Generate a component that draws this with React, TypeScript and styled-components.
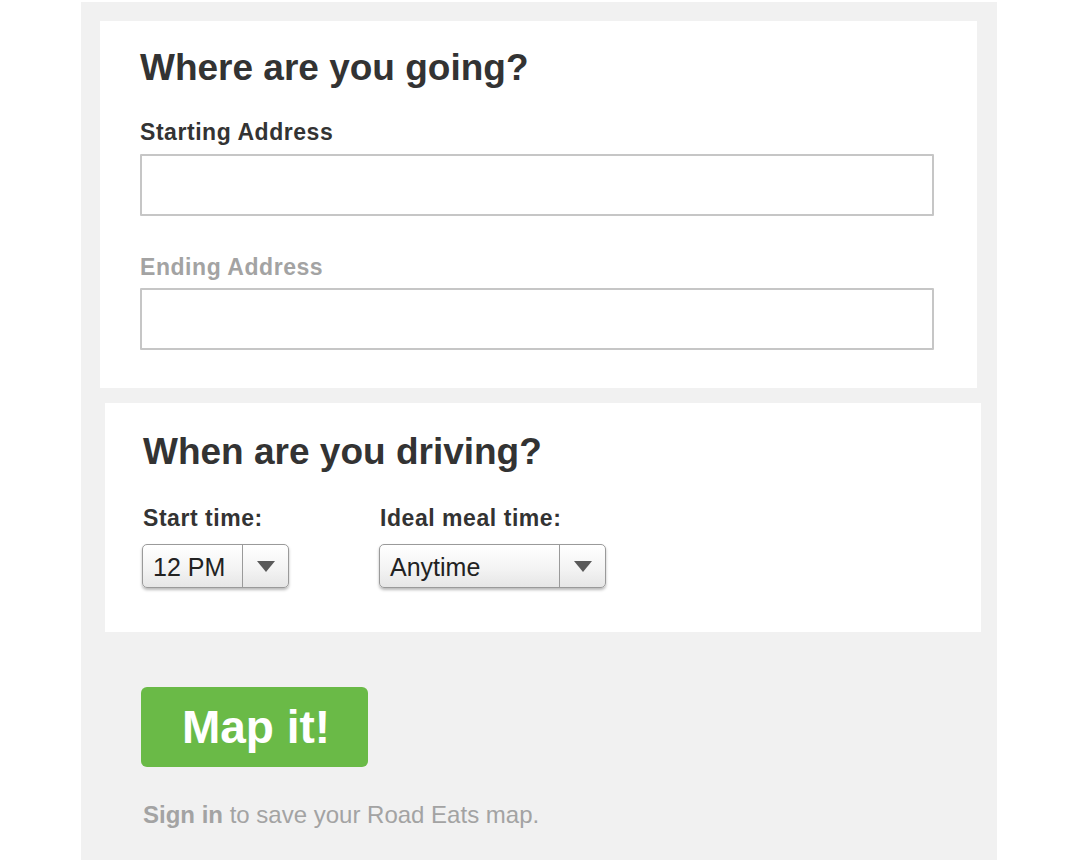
import React from 'react';
import styled, { createGlobalStyle } from 'styled-components';

const colors = {
  panel: '#f1f1f1',
  card: '#ffffff',
  text: '#333333',
  muted: '#a3a3a3',
  inputBorder: '#c6c6c6',
  green: '#6aba47',
};

const GlobalStyle = createGlobalStyle`
  body {
    margin: 0;
    background: #ffffff;
    font-family: "Liberation Sans", Arial, Helvetica, sans-serif;
    color: ${colors.text};
  }
`;

const Panel = styled('main')`
  box-sizing: border-box;
  width: 916px;
  min-height: 858px;
  margin: 2px 0 0 81px;
  padding: 19px 0 0;
  background: ${colors.panel};
`;

interface CardProps {
  offset: number;
}

const Card = styled('section')<CardProps>`
  box-sizing: border-box;
  background: ${colors.card};
  margin-left: ${props => props.offset}px;
`;

const PlaceCard = styled(Card)`
  width: 877px;
  padding: 28px 44px 38px 40px;
`;

const TimeCard = styled(Card)`
  width: 876px;
  margin-top: 15px;
  padding: 30px 40px 44px 38px;
`;

const Heading = styled('h2')`
  margin: 0;
  font-size: 37px;
  line-height: 37px;
  font-weight: bold;
  color: ${colors.text};
`;

const Field = styled('div')`
  display: flex;
  flex-direction: column;
  gap: 10px;
  margin-top: 35px;

  & + & {
    gap: 9px;
    margin-top: 40px;
  }
`;

interface LabelProps {
  dim?: boolean;
}

const Label = styled('label')<LabelProps>`
  font-size: 23px;
  line-height: 23px;
  font-weight: bold;
  letter-spacing: 0.55px;
  color: ${props => (props.dim ? colors.muted : colors.text)};
`;

const TextInput = styled('input')`
  box-sizing: border-box;
  width: 794px;
  height: 62px;
  margin: 0;
  padding: 0 14px;
  border: 2px solid ${colors.inputBorder};
  border-radius: 1px;
  background: #fff;
  font: 23px "Liberation Sans", Arial, sans-serif;
  outline: none;
`;

const TimeRow = styled('div')`
  display: flex;
  margin-top: 37px;
`;

interface TimeColumnProps {
  width?: number;
}

const TimeColumn = styled('div')<TimeColumnProps>`
  display: flex;
  flex-direction: column;
  align-items: flex-start;
  gap: 14px;
  width: ${props => (props.width ? `${props.width}px` : 'auto')};
`;

interface SelectBoxProps {
  width: number;
}

const SelectBox = styled('div')<SelectBoxProps>`
  box-sizing: border-box;
  display: flex;
  align-items: stretch;
  width: ${props => props.width}px;
  height: 44px;
  margin-left: -1px;
  border: 1px solid #9a9a9a;
  border-radius: 5px;
  background: linear-gradient(#ffffff, #f4f4f4 55%, #e6e6e6);
  box-shadow: 0 2px 3px rgba(0, 0, 0, 0.28);
`;

const SelectValue = styled('span')`
  flex: 1;
  display: flex;
  align-items: center;
  padding: 3px 0 0 10px;
  font-size: 25px;
  color: #222;
`;

const SelectArrow = styled('span')`
  display: flex;
  align-items: center;
  justify-content: center;
  width: 45px;
  border-left: 1px solid #9a9a9a;

  &::after {
    content: '';
    width: 0;
    height: 0;
    border-left: 9px solid transparent;
    border-right: 9px solid transparent;
    border-top: 11px solid #5a5a5a;
  }
`;

const MapButton = styled('button')`
  display: block;
  width: 227px;
  height: 80px;
  margin: 55px 0 0 60px;
  padding: 0 0 0 3px;
  border: none;
  border-radius: 6px;
  background: ${colors.green};
  color: #fff;
  font: bold 46px/1 "Liberation Sans", Arial, sans-serif;
  cursor: pointer;
`;

const SignInNote = styled('p')`
  margin: 36px 0 0 62px;
  font-size: 24px;
  line-height: 24px;
  color: ${colors.muted};

  strong {
    font-weight: bold;
  }
`;

interface SelectProps {
  value: string;
  width: number;
}

const Select: React.FC<SelectProps> = ({ value, width }) => (
  <SelectBox width={width} role="combobox">
    <SelectValue>{value}</SelectValue>
    <SelectArrow />
  </SelectBox>
);

const App: React.FC = () => (
  <>
    <GlobalStyle />
    <Panel>
      <PlaceCard offset={19}>
        <Heading>Where are you going?</Heading>
        <Field>
          <Label htmlFor="start">Starting Address</Label>
          <TextInput id="start" type="text" />
        </Field>
        <Field>
          <Label htmlFor="end" dim>
            Ending Address
          </Label>
          <TextInput id="end" type="text" />
        </Field>
      </PlaceCard>

      <TimeCard offset={24}>
        <Heading>When are you driving?</Heading>
        <TimeRow>
          <TimeColumn width={237}>
            <Label>Start time:</Label>
            <Select value="12 PM" width={147} />
          </TimeColumn>
          <TimeColumn>
            <Label>Ideal meal time:</Label>
            <Select value="Anytime" width={227} />
          </TimeColumn>
        </TimeRow>
      </TimeCard>

      <MapButton type="button">Map it!</MapButton>
      <SignInNote>
        <strong>Sign in</strong> to save your Road Eats map.
      </SignInNote>
    </Panel>
  </>
);

export default App;
